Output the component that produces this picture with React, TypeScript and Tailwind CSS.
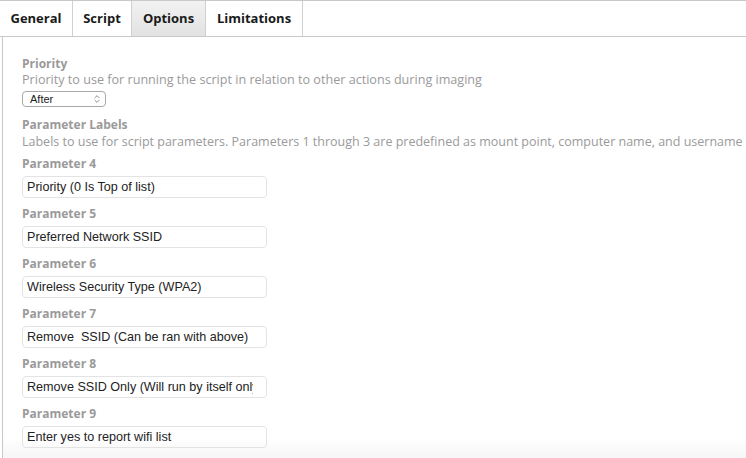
import { LuChevronsUpDown } from 'react-icons/lu'

const tabs = [
    { name: 'General', w: 'w-[73px]' },
    { name: 'Script', w: 'w-[59px]' },
    { name: 'Options', w: 'w-[74px]' },
    { name: 'Limitations', w: 'w-[97px]' },
]

const params = [
    { label: 'Parameter 4', value: 'Priority (0 Is Top of list)' },
    { label: 'Parameter 5', value: 'Preferred Network SSID' },
    { label: 'Parameter 6', value: 'Wireless Security Type (WPA2)' },
    { label: 'Parameter 7', value: 'Remove  SSID (Can be ran with above)' },
    { label: 'Parameter 8', value: 'Remove SSID Only (Will run by itself only)' },
    { label: 'Parameter 9', value: 'Enter yes to report wifi list' },
]

export default function App() {
    return (
        <div
            className="w-[746px] h-[458px] overflow-hidden bg-white"
            style={{ fontFamily: '"Open Sans", "DejaVu Sans", sans-serif' }}
        >
            <div className="flex h-[37px] border-t border-b border-[#c8c8c8]">
                {tabs.map((t) => (
                    <div
                        key={t.name}
                        className={
                            'flex items-center justify-center text-[13px] font-bold text-[#1a1a1a] border-r border-[#d0d0d0] ' +
                            t.w +
                            (t.name === 'Options' ? ' bg-gradient-to-b from-[#f2f2f2] to-[#e2e2e2]' : '')
                        }
                    >
                        {t.name}
                    </div>
                ))}
            </div>

            <div className="ml-[2px] border-l border-[#c8c8c8] h-[421px] pl-[19px] pt-[19px] bg-gradient-to-b from-white from-[95%] to-[#f6f6f6]">
                <div className="text-[12px] font-bold text-[#9a9a9a] leading-[16px]">Priority</div>
                <div className="text-[12.6px] text-[#9a9a9a] leading-[16px] whitespace-nowrap">
                    Priority to use for running the script in relation to other actions during imaging
                </div>
                <div
                    className="mt-[3px] flex items-center justify-between w-[84px] h-[16px] border border-[#a8a8a8] rounded-[4px] pl-[7px] pr-[3px] text-[11px] text-[#222] bg-white"
                    style={{ fontFamily: '"Liberation Sans", sans-serif' }}
                >
                    <span>After</span>
                    <LuChevronsUpDown className="w-[10px] h-[10px] text-[#777]" />
                </div>

                <div className="mt-[10px] text-[12px] font-bold text-[#9a9a9a] leading-[16px]">Parameter Labels</div>
                <div className="text-[12.5px] text-[#9a9a9a] leading-[17px] whitespace-nowrap">
                    Labels to use for script parameters. Parameters 1 through 3 are predefined as mount point, computer name, and username
                </div>

                <div className="mt-[6px] flex flex-col gap-[8px]">
                    {params.map((p) => (
                        <div key={p.label} className="flex flex-col gap-[4px]">
                            <div className="text-[12px] font-bold text-[#9a9a9a] leading-[16px]">{p.label}</div>
                            <div
                                className="w-[245px] h-[22px] border border-[#e3e3e3] rounded-[4px] px-[4px] flex items-center text-[12.6px] text-[#222]"
                                style={{ fontFamily: '"Liberation Sans", sans-serif' }}
                            >
                                <div className="w-[226px] overflow-hidden whitespace-pre">{p.value}</div>
                            </div>
                        </div>
                    ))}
                </div>
            </div>
        </div>
    )
}
